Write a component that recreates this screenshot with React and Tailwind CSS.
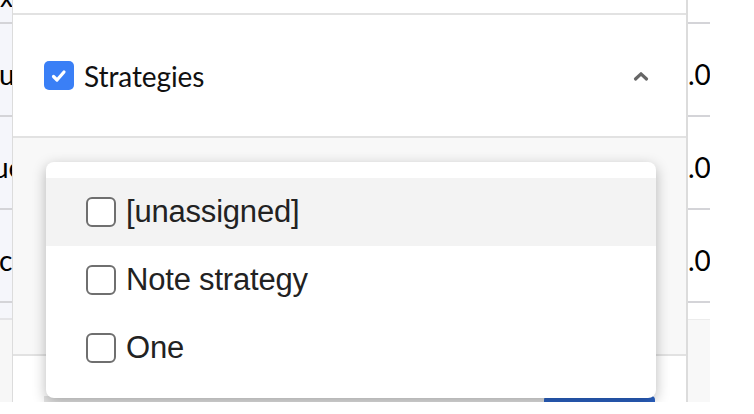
import React from 'react';

const Checkbox = ({ checked }) =>
  checked ? (
    <div className="w-[30px] h-[29px] rounded-[5px] bg-[#3a7ff6] flex items-center justify-center shrink-0">
      <svg width="18" height="18" viewBox="0 0 18 18">
        <path d="M3.5 9.5 L7 13 L14 5" fill="none" stroke="#fff" strokeWidth="3.2" strokeLinecap="round" strokeLinejoin="round" />
      </svg>
    </div>
  ) : (
    <div className="w-[30px] h-[30px] rounded-[6px] border-2 border-[#6f6f6f] bg-white shrink-0" />
  );

const options = ['[unassigned]', 'Note strategy', 'One'];

export default function App() {
  return (
    <div className="w-[754px] h-[414px] bg-white overflow-hidden" style={{ fontFamily: '"Liberation Sans", Arial, sans-serif' }}>
      <div className="relative flex h-[402px] overflow-hidden">
        {/* Left table column (clipped) */}
        <div className="w-[12px] shrink-0 flex flex-col bg-[#f5f6fb] overflow-hidden" style={{ fontFamily: 'Lato, sans-serif' }}>
          <div className="h-[24px] shrink-0 border-b-2 border-[#d4d4d8] overflow-hidden">
            <div className="text-[26px] leading-none text-black -mt-[16px]">x</div>
          </div>
          {['u', 'ue', 'c'].map((t, i) => (
            <div key={i} className={`h-[93px] shrink-0 border-b-2 border-[#d4d4d8] flex items-center pt-[8px] whitespace-nowrap text-[28px] text-black ${i === 1 ? '-ml-[7px]' : '-ml-[1px]'}`}>
              {t}
            </div>
          ))}
          <div className="h-[17px] shrink-0 border-b-2 border-[#e4e4e7]" />
          <div className="flex-1 bg-[#f7f7f7]" />
        </div>

        {/* Panel */}
        <div className="w-[676px] shrink-0 flex flex-col border-l border-r-2 border-[#dcdcdc] bg-white">
          <div className="h-[15px] shrink-0 border-b-2 border-[#e2e2e2]" />
          <div className="h-[123px] shrink-0 flex items-center pl-[31px] pr-[37px] border-b-2 border-[#e2e2e2]" style={{ fontFamily: 'Lato, sans-serif' }}>
            <Checkbox checked />
            <span className="ml-[10px] text-[28px] text-[#111] tracking-[-0.1px]">Strategies</span>
            <svg className="ml-auto" width="16" height="12" viewBox="0 0 16 12">
              <path d="M2.5 9 L8 3.8 L13.5 9" fill="none" stroke="#666" strokeWidth="3.2" strokeLinecap="round" strokeLinejoin="round" />
            </svg>
          </div>
          <div className="h-[218px] shrink-0 bg-[#f8f8f8] border-b-2 border-[#e2e2e2] px-[33px] pt-[46px] flex flex-col gap-[60px]">
            <div className="h-[50px] w-[610px] rounded-[6px] border border-[#b8b8b8] bg-[#f6f6f6]" />
            <div className="h-[26px] w-[40px] rounded-[4px] border-2 border-[#7a7a7a] bg-white" />
          </div>
          <div className="flex-1 flex justify-end items-start pt-[40px] pr-[31px]">
            <div className="w-[500px] h-[40px] bg-[#e6e6e6]" />
            <div className="w-[111px] h-[40px] rounded-[4px] bg-[#2b63c6]" />
          </div>
        </div>

        {/* Right table column (clipped) */}
        <div className="w-[22px] shrink-0 flex flex-col overflow-hidden" style={{ fontFamily: 'Lato, sans-serif' }}>
          <div className="h-[24px] shrink-0 border-b-2 border-[#d4d4d8]" />
          {[0, 1, 2].map((i) => (
            <div key={i} className="h-[93px] shrink-0 border-b-2 border-[#d4d4d8] flex items-center pt-[8px] whitespace-nowrap text-[28px] text-black">
              .0
            </div>
          ))}
          <div className="h-[17px] shrink-0 border-b border-[#ececec]" />
          <div className="flex-1 bg-[#f8f8f8]" />
        </div>

        {/* Dropdown menu */}
        <div className="absolute left-[46px] top-[162px] w-[610px] h-[236px] rounded-[8px] bg-white shadow-[0_4px_14px_rgba(0,0,0,0.28)] py-[16px]">
          {options.map((o, i) => (
            <div key={o} className={`h-[68px] flex items-center pl-[40px] ${i === 0 ? 'bg-[#f3f3f3]' : ''}`}>
              <Checkbox />
              <span className="ml-[10px] text-[31px] text-[#222] tracking-[-0.2px]">{o}</span>
            </div>
          ))}
        </div>
      </div>
    </div>
  );
}
